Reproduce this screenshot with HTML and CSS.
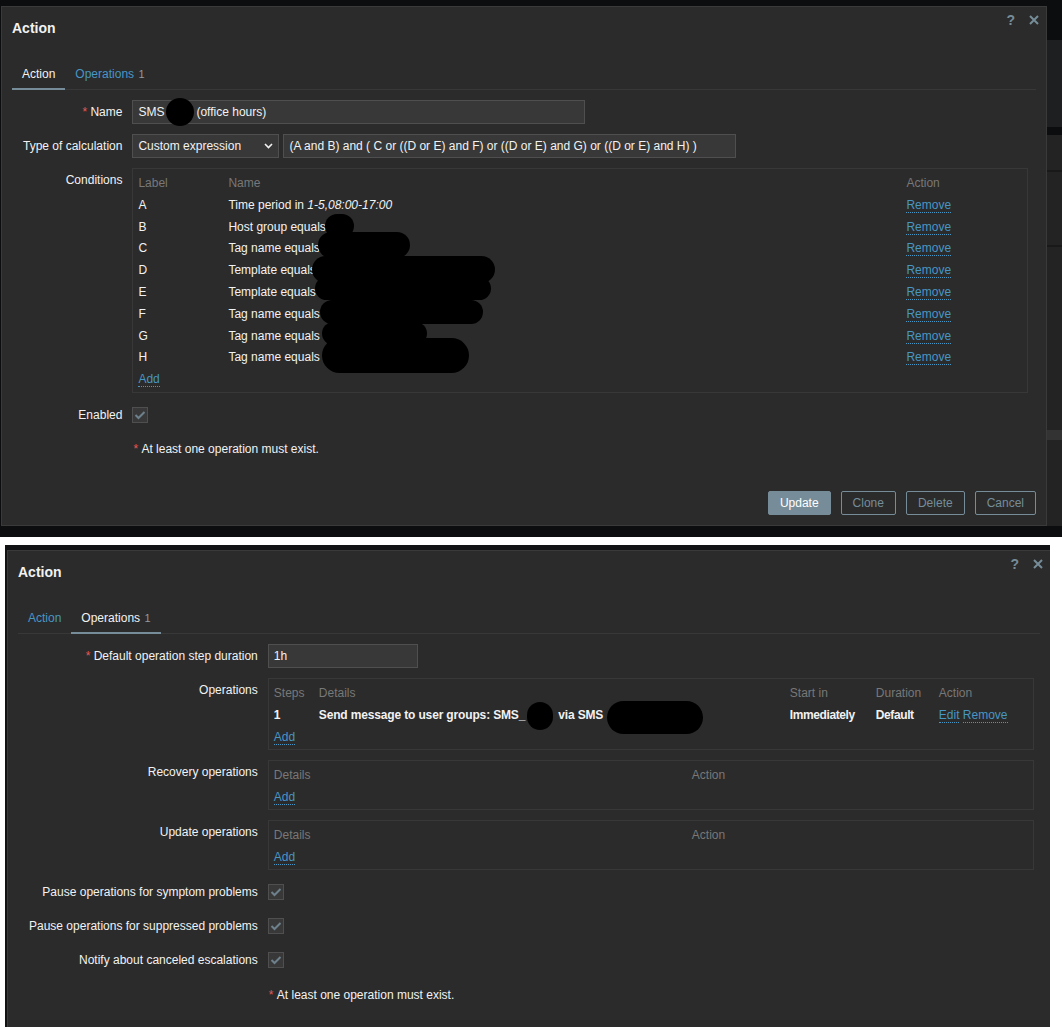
FILE: index.html
```html
<!DOCTYPE html>
<html lang="en">
<head>
  <meta charset="UTF-8">
  <title>Action</title>
  <link rel="stylesheet" href="styles.css">
</head>
<body>
  <!-- first capture: Action tab -->
  <div class="shot-top">
    <div class="dialog dialog-top">
      <div class="dlg-head">
        <h4>Action</h4>
        <div class="dlg-tools">
          <span class="help">?</span>
          <svg width="10" height="10" viewBox="0 0 10 10"><path d="M1 1L9 9M9 1L1 9" stroke="#768d99" stroke-width="2"/></svg>
        </div>
      </div>
      <ul class="tabs">
        <li class="tab active">Action</li>
        <li class="tab"><span class="tab-link">Operations</span> <span class="count">1</span></li>
      </ul>
      <div class="form">
        <div class="lbl"><span class="req">*</span> Name</div>
        <div class="field">
          <div class="input w-453">SMS<span class="blot blot-name"></span>(office hours)</div>
        </div>

        <div class="lbl">Type of calculation</div>
        <div class="field">
          <div class="input select">Custom expression
            <svg width="9" height="6" viewBox="0 0 9 6"><path d="M1 1l3.5 3.5L8 1" fill="none" stroke="#f2f2f2" stroke-width="1.6"/></svg>
          </div>
          <div class="input w-453">(A and B) and ( C or ((D or E) and F) or ((D or E) and G) or ((D or E) and H) )</div>
        </div>

        <div class="lbl">Conditions</div>
        <div class="field">
          <div class="box cond-box">
            <div class="row cond-row head"><span>Label</span><span>Name</span><span>Action</span></div>
            <div class="row cond-row"><span>A</span><span>Time period in <i>1-5,08:00-17:00</i></span><span><a class="link">Remove</a></span></div>
            <div class="row cond-row"><span>B</span><span>Host group equals</span><span><a class="link">Remove</a></span></div>
            <div class="row cond-row"><span>C</span><span>Tag name equals</span><span><a class="link">Remove</a></span></div>
            <div class="row cond-row"><span>D</span><span>Template equals</span><span><a class="link">Remove</a></span></div>
            <div class="row cond-row"><span>E</span><span>Template equals</span><span><a class="link">Remove</a></span></div>
            <div class="row cond-row"><span>F</span><span>Tag name equals</span><span><a class="link">Remove</a></span></div>
            <div class="row cond-row"><span>G</span><span>Tag name equals</span><span><a class="link">Remove</a></span></div>
            <div class="row cond-row"><span>H</span><span>Tag name equals</span><span><a class="link">Remove</a></span></div>
            <div class="row cond-row"><span><a class="link">Add</a></span></div>

            <!-- redaction marks over the condition values -->
            <span class="blot mark" style="left:192px; top:45px; width:29px; height:24px;"></span>
            <span class="blot mark" style="left:185px; top:63px; width:92px; height:26px;"></span>
            <span class="blot mark" style="left:179px; top:87px; width:183px; height:27px;"></span>
            <span class="blot mark" style="left:182px; top:108px; width:176px; height:23px;"></span>
            <span class="blot mark" style="left:187px; top:131px; width:163px; height:24px;"></span>
            <span class="blot mark" style="left:189px; top:153px; width:105px; height:23px;"></span>
            <span class="blot mark" style="left:189px; top:169px; width:147px; height:35px;"></span>
          </div>
        </div>

        <div class="lbl">Enabled</div>
        <div class="field check">
          <span class="cb"><svg width="12" height="10" viewBox="0 0 12 10"><path d="M1.5 5l3 3L10.5 2" fill="none" stroke="#6d808c" stroke-width="2"/></svg></span>
        </div>

        <div></div>
        <div class="field msg"><span class="req">*</span>&nbsp;At least one operation must exist.</div>
      </div>
      <div class="dlg-foot">
        <button class="btn btn-main">Update</button>
        <button class="btn">Clone</button>
        <button class="btn">Delete</button>
        <button class="btn">Cancel</button>
      </div>
    </div>
    <div class="strip"></div>
  </div>

  <!-- second capture: Operations tab -->
  <div class="shot-bottom">
    <div class="frame">
      <div class="dialog dialog-bottom">
        <div class="dlg-head">
          <h4>Action</h4>
          <div class="dlg-tools">
            <span class="help">?</span>
            <svg width="10" height="10" viewBox="0 0 10 10"><path d="M1 1L9 9M9 1L1 9" stroke="#768d99" stroke-width="2"/></svg>
          </div>
        </div>
        <ul class="tabs">
          <li class="tab"><span class="tab-link">Action</span></li>
          <li class="tab active">Operations <span class="count">1</span></li>
        </ul>
        <div class="form">
          <div class="lbl"><span class="req">*</span> Default operation step duration</div>
          <div class="field"><div class="input w-150">1h</div></div>

          <div class="lbl">Operations</div>
          <div class="field">
            <div class="box ops-box">
              <div class="row ops-row head"><span>Steps</span><span>Details</span><span>Start in</span><span>Duration</span><span>Action</span></div>
              <div class="row ops-row strong">
                <span>1</span>
                <span class="tight">Send message to user groups: SMS_<span class="blot blot-grp"></span>via SMS<span class="blot blot-via"></span></span>
                <span class="tighter">Immediately</span>
                <span class="tighter">Default</span>
                <span class="plain"><a class="link">Edit</a> <a class="link">Remove</a></span>
              </div>
              <div class="row ops-row"><span><a class="link">Add</a></span></div>
            </div>
          </div>

          <div class="lbl">Recovery operations</div>
          <div class="field">
            <div class="box ops-box">
              <div class="row simple-row head"><span>Details</span><span>Action</span></div>
              <div class="row simple-row"><span><a class="link">Add</a></span></div>
            </div>
          </div>

          <div class="lbl">Update operations</div>
          <div class="field">
            <div class="box ops-box">
              <div class="row simple-row head"><span>Details</span><span>Action</span></div>
              <div class="row simple-row"><span><a class="link">Add</a></span></div>
            </div>
          </div>

          <div class="lbl">Pause operations for symptom problems</div>
          <div class="field check">
            <span class="cb"><svg width="12" height="10" viewBox="0 0 12 10"><path d="M1.5 5l3 3L10.5 2" fill="none" stroke="#6d808c" stroke-width="2"/></svg></span>
          </div>

          <div class="lbl">Pause operations for suppressed problems</div>
          <div class="field check">
            <span class="cb"><svg width="12" height="10" viewBox="0 0 12 10"><path d="M1.5 5l3 3L10.5 2" fill="none" stroke="#6d808c" stroke-width="2"/></svg></span>
          </div>

          <div class="lbl">Notify about canceled escalations</div>
          <div class="field check">
            <span class="cb"><svg width="12" height="10" viewBox="0 0 12 10"><path d="M1.5 5l3 3L10.5 2" fill="none" stroke="#6d808c" stroke-width="2"/></svg></span>
          </div>

          <div></div>
          <div class="field msg"><span class="req">*</span>&nbsp;At least one operation must exist.</div>
        </div>
      </div>
    </div>
  </div>
</body>
</html>
```

FILE: styles.css
```css
* {
  box-sizing: border-box;
}
html, body {
  margin: 0;
  padding: 0;
}
body {
  width: 1062px;
  height: 1027px;
  overflow: hidden;
  background: #fff;
  font-family: "Liberation Sans", Arial, sans-serif;
  font-size: 12px;
  color: #f2f2f2;
}

/* captures */
.shot-top {
  display: flex;
  height: 537px;
  background: #0c0d0f;
}
.strip {
  flex: 1;
  background: linear-gradient(to bottom,
    #0c0d0f 0 40px, #1e1f20 40px 127px, #0c0d0f 127px 135px,
    #232323 135px 170px, #191919 170px 172px, #232323 172px 245px,
    #191919 245px 247px, #232323 247px 430px, #333 430px 440px,
    #232323 440px 526px, #0c0d0f 526px);
}
.shot-bottom {
  margin-top: 8px;
  padding-left: 5px;
}
.frame {
  width: 1045px;
  height: 482px;
  background: #111213;
  padding: 5px 0 0 2px;
}

/* dialog */
.dialog {
  background: #2b2b2b;
  border: 1px solid #3a3a3a;
  display: flex;
  flex-direction: column;
}
.dialog-top {
  flex: none;
  width: 1046px;
  height: 520px;
  margin: 6px 0 0 1px;
}
.dialog-bottom {
  height: 100%;
  border-right: none;
  border-bottom: none;
}
.dlg-head {
  display: flex;
  justify-content: space-between;
  align-items: flex-start;
  height: 53px;
  padding: 12px 10px 0;
}
.dlg-head h4 {
  margin: 0;
  font-size: 14px;
  line-height: 18px;
  font-weight: bold;
}
.dlg-tools {
  display: flex;
  align-items: center;
  gap: 14px;
  height: 10px;
  margin: -4px -3px 0 0;
}
.help {
  color: #768d99;
  font-weight: bold;
  font-size: 14px;
  line-height: 10px;
}

/* tabs */
.tabs {
  display: flex;
  margin: 0 10px;
  padding: 0;
  list-style: none;
  border-bottom: 1px solid #383838;
}
.tab {
  height: 29px;
  padding: 7px 10px 0;
  line-height: 15px;
}
.tab.active {
  height: 30px;
  margin-bottom: -1px;
  border-bottom: 2px solid #768d99;
}
.tab-link {
  color: #4796c4;
}
.count {
  color: #8d9ca5;
  font-size: 11px;
  margin-left: 1px;
}

/* form grid */
.form {
  display: grid;
  grid-template-columns: max-content 1fr;
  column-gap: 10px;
  row-gap: 10px;
  padding: 10px 10px 0;
}
.lbl {
  padding-left: 11px;
  text-align: right;
  line-height: 24px;
}
.req {
  color: #e45959;
}
.field {
  display: flex;
  align-items: flex-start;
  gap: 4px;
}
.field.check {
  height: 24px;
  align-items: center;
}
.field.msg {
  height: 24px;
  align-items: center;
  gap: 0;
  padding: 1px 0 0 1px;
}

.input {
  height: 24px;
  line-height: 22px;
  padding: 0 5px;
  background: #383838;
  border: 1px solid #4f4f4f;
  white-space: nowrap;
}
.w-453 { width: 453px; }
.w-150 { width: 150px; }
.select {
  width: 147px;
  display: flex;
  align-items: center;
  justify-content: space-between;
}

.cb {
  width: 16px;
  height: 16px;
  display: flex;
  align-items: center;
  justify-content: center;
  background: #383838;
  border: 1px solid #4f4f4f;
}

/* bordered tables */
.box {
  position: relative;
  border: 1px solid #383838;
  padding: 3px 5px 1px;
}
.cond-box {
  width: 896px;
  padding-top: 4px;
}
.ops-box { width: 766px; }
.row {
  display: grid;
  height: 22px;
  line-height: 22px;
  white-space: nowrap;
}
.row.head {
  color: #787878;
}
.cond-row {
  grid-template-columns: 90px 678px 1fr;
  height: 21.8px;
  line-height: 21.8px;
}
.ops-row {
  grid-template-columns: 45px 471px 86px 63px 1fr;
}
.simple-row {
  grid-template-columns: 418px 1fr;
}
.strong {
  font-weight: bold;
}
.strong .plain {
  font-weight: normal;
}
.tight {
  letter-spacing: -0.15px;
}
.tighter {
  letter-spacing: -0.4px;
}
.link {
  color: #4796c4;
  text-decoration: none;
  border-bottom: 1px dotted #4796c4;
}

/* redaction marks */
.blot {
  background: #000;
  border-radius: 999px;
}
.mark {
  position: absolute;
}
.blot-name {
  display: inline-block;
  width: 28px;
  height: 28px;
  vertical-align: top;
  margin: -3px 2px -3px 2px;
}
.blot-grp {
  display: inline-block;
  width: 26px;
  height: 28px;
  vertical-align: top;
  margin: -2px 5px -4px 2px;
}
.blot-via {
  display: inline-block;
  width: 96px;
  height: 33px;
  vertical-align: top;
  margin: -3px 0 -8px 4px;
}

/* footer */
.dlg-foot {
  margin-top: auto;
  display: flex;
  justify-content: flex-end;
  gap: 10px;
  padding: 0 10px 10px;
}
.btn {
  height: 24px;
  padding: 0 11px;
  font: inherit;
  color: #768d99;
  background: transparent;
  border: 1px solid #768d99;
  border-radius: 2px;
}
.btn-main {
  color: #fff;
  background: #768d99;
}
```
